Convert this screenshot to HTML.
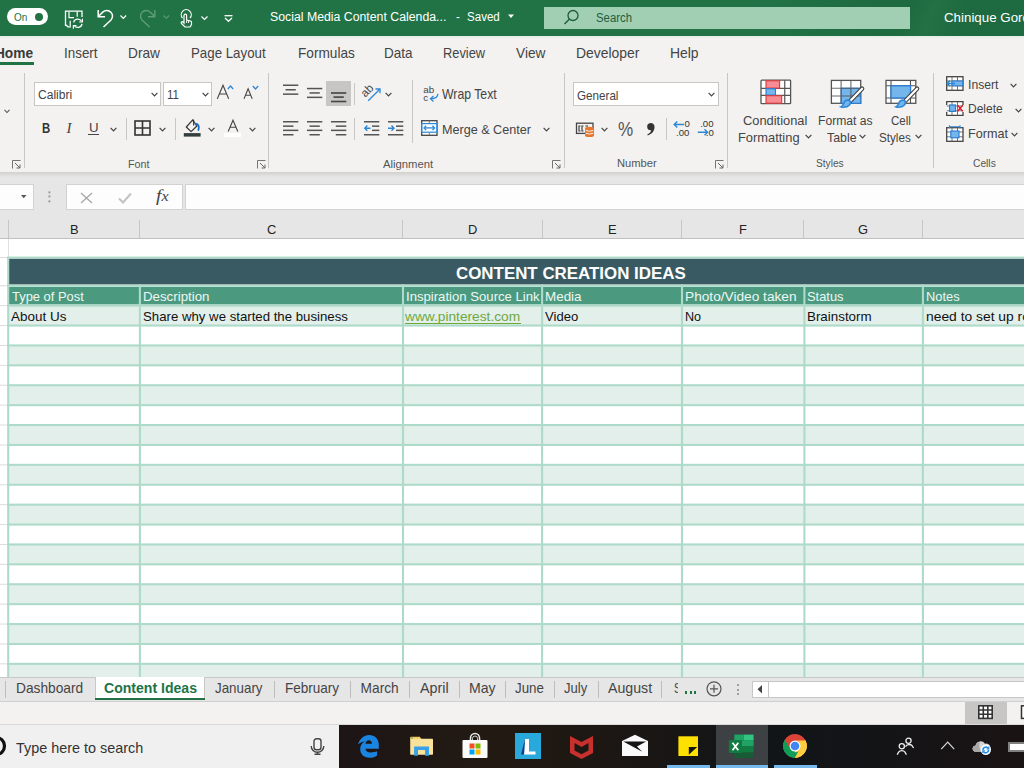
<!DOCTYPE html>
<html><head><meta charset="utf-8"><style>
html,body{margin:0;padding:0;}
body{width:1024px;height:768px;overflow:hidden;position:relative;background:#f3f2f1;font-family:"Liberation Sans",sans-serif;}
.t{position:absolute;white-space:nowrap;transform-origin:0 0;}
.r{position:absolute;}
svg.r{overflow:visible;}
</style></head><body>
<div class="r" style="left:0px;top:0px;width:1024px;height:36px;background:#217346;"></div>
<div class="r" style="left:0;top:0;width:1024px;height:36px;background:linear-gradient(90deg,rgba(0,0,0,0) 0px,rgba(0,0,0,0) 760px,rgba(10,40,20,0.10) 860px,rgba(10,40,20,0.12) 1024px)"></div>
<div class="r" style="left:0;top:0;width:1024px;height:36px;background:linear-gradient(115deg,rgba(255,255,255,0) 0px,rgba(255,255,255,0) 830px,rgba(60,140,90,0.18) 850px,rgba(255,255,255,0) 880px,rgba(255,255,255,0) 1024px)"></div>
<div class="r" style="left:0px;top:36px;width:1024px;height:136px;background:#f3f2f1;"></div>
<div class="r" style="left:0px;top:36px;width:1024px;height:2px;background:#eaeee9;"></div>
<div class="r" style="left:0px;top:172px;width:1024px;height:66px;background:#e6e6e6;"></div>
<div class="r" style="left:0;top:172px;width:1024px;height:5px;background:linear-gradient(#d2d0ce,#e6e6e6)"></div>
<div class="r" style="left:7px;top:8px;width:41px;height:17px;background:#ffffff;border-radius:8.5px"></div>
<div class="t" style="left:13.70px;top:12.16px;font-size:10.70px;line-height:10.70px;color:#217346;font-weight:normal;transform:scaleX(0.9311);">On</div>
<div class="r" style="left:35px;top:13px;width:8px;height:8px;border-radius:4px;background:#217346"></div>
<div class="t" style="left:269.80px;top:10.70px;font-size:12.89px;line-height:12.89px;color:#ffffff;font-weight:normal;transform:scaleX(0.9549);">Social Media Content Calenda...</div>
<div class="t" style="left:455.60px;top:10.70px;font-size:12.89px;line-height:12.89px;color:#ffffff;font-weight:normal;transform:scaleX(0.9096);">-</div>
<div class="t" style="left:467.00px;top:10.70px;font-size:12.89px;line-height:12.89px;color:#ffffff;font-weight:normal;transform:scaleX(0.8973);">Saved</div>
<svg class="r" style="left:508px;top:14px;" width="6" height="5" viewBox="0 0 6 5"><path d="M0 0.5 L6 0.5 L3 4 Z" fill="#fff"/></svg>
<div class="r" style="left:544px;top:7px;width:366px;height:22px;background:#a0cfb4;"></div>
<svg class="r" style="left:562px;top:9px;" width="16" height="17" viewBox="0 0 16 17"><circle cx="11" cy="6.5" r="5" fill="none" stroke="#1e5c3a" stroke-width="1.3"/><path d="M7.3 10.2 L2.5 15" stroke="#1e5c3a" stroke-width="1.4"/></svg>
<div class="t" style="left:596.00px;top:12.34px;font-size:12.62px;line-height:12.62px;color:#23603f;font-weight:normal;transform:scaleX(0.9006);">Search</div>
<div class="t" style="left:944.00px;top:12.34px;font-size:12.62px;line-height:12.62px;color:#ffffff;font-weight:normal;transform:scaleX(1.0569);">Chinique Gord</div>
<div class="t" style="left:-5.10px;top:46.51px;font-size:13.72px;line-height:13.72px;color:#3a3a3a;font-weight:bold;transform:scaleX(1.0000);">Home</div>
<div class="t" style="left:63.50px;top:46.51px;font-size:13.72px;line-height:13.72px;color:#444444;font-weight:normal;transform:scaleX(0.9769);">Insert</div>
<div class="t" style="left:128.00px;top:46.51px;font-size:13.72px;line-height:13.72px;color:#444444;font-weight:normal;transform:scaleX(0.9980);">Draw</div>
<div class="t" style="left:191.00px;top:46.51px;font-size:13.72px;line-height:13.72px;color:#444444;font-weight:normal;transform:scaleX(0.9685);">Page Layout</div>
<div class="t" style="left:297.60px;top:46.51px;font-size:13.72px;line-height:13.72px;color:#444444;font-weight:normal;transform:scaleX(0.9953);">Formulas</div>
<div class="t" style="left:384.40px;top:46.51px;font-size:13.72px;line-height:13.72px;color:#444444;font-weight:normal;transform:scaleX(0.9835);">Data</div>
<div class="t" style="left:442.80px;top:46.51px;font-size:13.72px;line-height:13.72px;color:#444444;font-weight:normal;transform:scaleX(0.9372);">Review</div>
<div class="t" style="left:515.70px;top:46.51px;font-size:13.72px;line-height:13.72px;color:#444444;font-weight:normal;transform:scaleX(0.9991);">View</div>
<div class="t" style="left:575.70px;top:46.51px;font-size:13.72px;line-height:13.72px;color:#444444;font-weight:normal;transform:scaleX(1.0157);">Developer</div>
<div class="t" style="left:670.00px;top:46.51px;font-size:13.72px;line-height:13.72px;color:#444444;font-weight:normal;transform:scaleX(1.0133);">Help</div>
<div class="r" style="left:0px;top:62px;width:34px;height:3px;background:#217346;"></div>
<div class="r" style="left:24px;top:73px;width:1px;height:95px;background:#c8c6c4;"></div>
<div class="r" style="left:268px;top:73px;width:1px;height:95px;background:#c8c6c4;"></div>
<div class="r" style="left:564px;top:73px;width:1px;height:95px;background:#c8c6c4;"></div>
<div class="r" style="left:727px;top:73px;width:1px;height:95px;background:#c8c6c4;"></div>
<div class="r" style="left:933px;top:73px;width:1px;height:95px;background:#c8c6c4;"></div>
<svg class="r" style="left:64px;top:10px;" width="20" height="19" viewBox="0 0 20 19"><path d="M1.5 16 V1.2 H18 V7 M1.5 14.5 L3.9 16.8 H6.9" fill="none" stroke="#fff" stroke-width="1.3"/><path d="M5 1.5 V7.7 H10 M13.2 1.5 V6.8 M6.2 10.8 V16.3" fill="none" stroke="#fff" stroke-width="1.2"/><path d="M9.6 12.3 A4.3 4.3 0 0 1 17.5 11.2 M18 13.8 A4.3 4.3 0 0 1 10.2 15.5" fill="none" stroke="#fff" stroke-width="1.3"/><path d="M18.4 8.8 V12 H15.2 M9.4 18.8 V15.5 H12.5" fill="none" stroke="#fff" stroke-width="1.2"/></svg>
<svg class="r" style="left:96px;top:9px;" width="18" height="20" viewBox="0 0 18 20"><path d="M2.2 1 V7.7 H9" fill="none" stroke="#fff" stroke-width="1.5"/><path d="M2.6 7.3 L7 2.9 A5.7 5.7 0 0 1 15 11 L7.5 18" fill="none" stroke="#fff" stroke-width="1.5"/></svg>
<svg class="r" style="left:120px;top:15px;" width="7" height="4" viewBox="0 0 7 4"><path d="M0.5 0.5 L3.3 3.3 L6.1 0.5" fill="none" stroke="#fff" stroke-width="1.2"/></svg>
<svg class="r" style="left:139px;top:9px;" width="18" height="20" viewBox="0 0 18 20"><path d="M15.8 1 V7.7 H9" fill="none" stroke="#5f9c77" stroke-width="1.4"/><path d="M15.4 7.3 L11 2.9 A5.7 5.7 0 0 0 3 11 L10.5 18" fill="none" stroke="#5f9c77" stroke-width="1.4"/></svg>
<svg class="r" style="left:163px;top:15px;" width="7" height="4" viewBox="0 0 7 4"><path d="M0.5 0.5 L3.3 3.3 L6.1 0.5" fill="none" stroke="#5f9c77" stroke-width="1.1"/></svg>
<svg class="r" style="left:179px;top:9px;" width="14" height="19" viewBox="0 0 14 19"><path d="M3.5 9 A5 5 0 1 1 11 9" fill="none" stroke="#fff" stroke-width="1.2"/><path d="M5 14 V6.5 A1.3 1.3 0 0 1 7.6 6.5 V11 L11 11.8 A1.5 1.5 0 0 1 12.5 13.5 V15.5 L11 18 H6 L2.5 14.5 A1 1 0 0 1 4 13 Z" fill="none" stroke="#fff" stroke-width="1.2"/><path d="M7.6 11.5 V14 M9.5 11.5 V14" stroke="#fff" stroke-width="0.9"/></svg>
<svg class="r" style="left:201px;top:16px;" width="7" height="4" viewBox="0 0 7 4"><path d="M0.5 0.5 L3.5 3.5 L6.5 0.5" fill="none" stroke="#fff" stroke-width="1.2"/></svg>
<svg class="r" style="left:224px;top:15px;" width="9" height="7" viewBox="0 0 9 7"><path d="M0.5 0.7 H8.5" stroke="#fff" stroke-width="1.3"/><path d="M1 3 L4.5 6.3 L8 3" fill="none" stroke="#fff" stroke-width="1.3"/></svg>
<svg class="r" style="left:4px;top:109px;" width="6" height="5" viewBox="0 0 6 5"><path d="M0.5 0.8 L3 3.5 L5.5 0.8" fill="none" stroke="#555" stroke-width="1.1"/></svg>
<svg class="r" style="left:12px;top:160px;" width="9" height="9" viewBox="0 0 9 9"><path d="M0.5 8.5 V0.5 H8.5" fill="none" stroke="#666" stroke-width="0.9"/><path d="M3 3 L8 8 M8 4.5 V8 H4.5" fill="none" stroke="#666" stroke-width="1"/></svg>
<svg class="r" style="left:256.5px;top:160px;" width="9" height="9" viewBox="0 0 9 9"><path d="M0.5 8.5 V0.5 H8.5" fill="none" stroke="#666" stroke-width="0.9"/><path d="M3 3 L8 8 M8 4.5 V8 H4.5" fill="none" stroke="#666" stroke-width="1"/></svg>
<svg class="r" style="left:552px;top:160px;" width="9" height="9" viewBox="0 0 9 9"><path d="M0.5 8.5 V0.5 H8.5" fill="none" stroke="#666" stroke-width="0.9"/><path d="M3 3 L8 8 M8 4.5 V8 H4.5" fill="none" stroke="#666" stroke-width="1"/></svg>
<svg class="r" style="left:714.5px;top:160px;" width="9" height="9" viewBox="0 0 9 9"><path d="M0.5 8.5 V0.5 H8.5" fill="none" stroke="#666" stroke-width="0.9"/><path d="M3 3 L8 8 M8 4.5 V8 H4.5" fill="none" stroke="#666" stroke-width="1"/></svg>
<div class="r" style="left:34px;top:82px;width:127px;height:24px;background:#ffffff;box-sizing:border-box;border:1px solid #c8c6c4"></div>
<div class="t" style="left:37.60px;top:89.24px;font-size:12.62px;line-height:12.62px;color:#444444;font-weight:normal;transform:scaleX(0.9559);">Calibri</div>
<svg class="r" style="left:150.5px;top:92px;" width="7" height="5" viewBox="0 0 7 5"><path d="M0.6 0.8 L3.5 3.8 L6.4 0.8" fill="none" stroke="#444" stroke-width="1.2"/></svg>
<div class="r" style="left:163px;top:82px;width:49px;height:24px;background:#ffffff;box-sizing:border-box;border:1px solid #c8c6c4"></div>
<div class="t" style="left:166.60px;top:89.00px;font-size:12.89px;line-height:12.89px;color:#444444;font-weight:normal;transform:scaleX(0.8970);">11</div>
<svg class="r" style="left:201.5px;top:92px;" width="7" height="5" viewBox="0 0 7 5"><path d="M0.6 0.8 L3.5 3.8 L6.4 0.8" fill="none" stroke="#444" stroke-width="1.2"/></svg>
<svg class="r" style="left:216px;top:84px;" width="14" height="16" viewBox="0 0 14 16"><path d="M1.3 14.9 L7 1.3 L12.7 14.9 M3.4 10 H10.6" fill="none" stroke="#444" stroke-width="1.15"/></svg>
<svg class="r" style="left:227px;top:85px;" width="7" height="5" viewBox="0 0 7 5"><path d="M0.8 4 L3.5 1 L6.2 4" fill="none" stroke="#2b88d8" stroke-width="1.3"/></svg>
<svg class="r" style="left:243px;top:88px;" width="11" height="12" viewBox="0 0 11 12"><path d="M1 10.9 L5.1 0.8 L9.2 10.9 M2.6 7.3 H7.6" fill="none" stroke="#444" stroke-width="1.1"/></svg>
<svg class="r" style="left:251.5px;top:85px;" width="7" height="5" viewBox="0 0 7 5"><path d="M0.8 1 L3.5 4 L6.2 1" fill="none" stroke="#2b88d8" stroke-width="1.3"/></svg>
<div class="t" style="left:41.70px;top:121.51px;font-size:13.72px;line-height:13.72px;color:#333333;font-weight:bold;transform:scaleX(0.8274);">B</div>
<div class="t" style="left:66.5px;top:121px;font-family:Liberation Serif;font-style:italic;font-size:15px;line-height:15px;color:#444">I</div>
<div class="t" style="left:88.60px;top:121.14px;font-size:13.44px;line-height:13.44px;color:#444444;font-weight:normal;transform:scaleX(0.9884);">U</div>
<div class="r" style="left:88px;top:134px;width:11px;height:1px;background:#444444;"></div>
<svg class="r" style="left:109.5px;top:126.5px;" width="7" height="5" viewBox="0 0 7 5"><path d="M0.6 0.8 L3.5 3.8 L6.4 0.8" fill="none" stroke="#444" stroke-width="1.2"/></svg>
<div class="r" style="left:126px;top:118px;width:1px;height:22px;background:#c8c6c4;"></div>
<svg class="r" style="left:134px;top:120px;" width="17" height="16" viewBox="0 0 17 16"><rect x="1" y="1" width="15" height="14" fill="none" stroke="#333" stroke-width="1.6"/><path d="M8.5 1 V15 M1 8 H16" stroke="#333" stroke-width="1.6"/></svg>
<svg class="r" style="left:158.5px;top:127px;" width="7" height="5" viewBox="0 0 7 5"><path d="M0.6 0.8 L3.5 3.8 L6.4 0.8" fill="none" stroke="#444" stroke-width="1.2"/></svg>
<div class="r" style="left:175px;top:118px;width:1px;height:22px;background:#c8c6c4;"></div>
<svg class="r" style="left:183px;top:118px;" width="19" height="20" viewBox="0 0 19 20"><path d="M3.3 9 L9.5 2.2 L14.2 7.8 L8.1 13.6 Z" fill="none" stroke="#333" stroke-width="1.2" stroke-linejoin="round"/><path d="M9.5 2.2 C10 1.6 10.8 2 10.7 3 L10.6 7.6" fill="none" stroke="#333" stroke-width="1.1"/><path d="M12.6 6.5 C14 5.3 15.8 6.6 15.8 9 C15.8 10.3 15.5 11.3 15.4 12" fill="none" stroke="#1e6fc2" stroke-width="1.8" stroke-linecap="round"/><rect x="0.8" y="15.1" width="16.8" height="3.5" fill="#333f3e"/></svg>
<svg class="r" style="left:207.8px;top:127px;" width="7" height="5" viewBox="0 0 7 5"><path d="M0.6 0.8 L3.5 3.8 L6.4 0.8" fill="none" stroke="#444" stroke-width="1.2"/></svg>
<svg class="r" style="left:227px;top:119px;" width="12" height="13" viewBox="0 0 12 13"><path d="M1.2 12.5 L6 1.2 L10.8 12.5 M3 8.3 H9" fill="none" stroke="#444" stroke-width="1.1"/></svg>
<div class="r" style="left:224px;top:133px;width:17px;height:4px;background:#ffffff;"></div>
<svg class="r" style="left:248.5px;top:127px;" width="7" height="5" viewBox="0 0 7 5"><path d="M0.6 0.8 L3.5 3.8 L6.4 0.8" fill="none" stroke="#444" stroke-width="1.2"/></svg>
<div class="t" style="left:127.80px;top:159.62px;font-size:10.15px;line-height:10.15px;color:#555555;font-weight:normal;transform:scaleX(1.0639);">Font</div>
<svg class="r" style="left:282.5px;top:84px;" width="16" height="12" viewBox="0 0 16 12"><rect x="0" y="0.5" width="15.3" height="1.5" fill="#555"/><rect x="2.5" y="5" width="10.3" height="1.5" fill="#555"/><rect x="0" y="9.4" width="15.3" height="1.5" fill="#555"/></svg>
<svg class="r" style="left:306.6px;top:87px;" width="16" height="12" viewBox="0 0 16 12"><rect x="0" y="0.8" width="15.3" height="1.5" fill="#555"/><rect x="2.5" y="5.2" width="10.3" height="1.5" fill="#555"/><rect x="0" y="9.6" width="15.3" height="1.5" fill="#555"/></svg>
<div class="r" style="left:326px;top:81px;width:25px;height:25px;background:#c8c6c4;"></div>
<svg class="r" style="left:330.8px;top:92px;" width="16" height="12" viewBox="0 0 16 12"><rect x="0" y="0.2" width="15.3" height="1.6" fill="#444"/><rect x="2.5" y="4.3" width="10.3" height="1.6" fill="#444"/><rect x="0" y="8.7" width="15.3" height="1.6" fill="#444"/></svg>
<div class="r" style="left:354px;top:83px;width:1px;height:22px;background:#c8c6c4;"></div>
<svg class="r" style="left:361px;top:83px;" width="21" height="19" viewBox="0 0 21 19"><text x="0" y="0" font-family="Liberation Sans" font-size="11.5" fill="#444" transform="translate(4.2,14.8) rotate(-45)">ab</text><path d="M7.2 17.7 L18.8 6.2" stroke="#2b88d8" stroke-width="1.3"/><path d="M14.5 6 H19 V10.2" fill="none" stroke="#2b88d8" stroke-width="1.3"/></svg>
<svg class="r" style="left:385px;top:92px;" width="7" height="5" viewBox="0 0 7 5"><path d="M0.6 0.8 L3.5 3.8 L6.4 0.8" fill="none" stroke="#444" stroke-width="1.2"/></svg>
<svg class="r" style="left:282.5px;top:120.5px;" width="16" height="15" viewBox="0 0 16 15"><rect x="0" y="0.0" width="15.3" height="1.5" fill="#555"/><rect x="0" y="4.4" width="10.5" height="1.5" fill="#555"/><rect x="0" y="8.6" width="15.3" height="1.5" fill="#555"/><rect x="0" y="13.0" width="10.5" height="1.5" fill="#555"/></svg>
<svg class="r" style="left:306.6px;top:120.5px;" width="16" height="15" viewBox="0 0 16 15"><rect x="0" y="0.0" width="15.3" height="1.5" fill="#555"/><rect x="2.5" y="4.4" width="10.3" height="1.5" fill="#555"/><rect x="0" y="8.6" width="15.3" height="1.5" fill="#555"/><rect x="2.5" y="13.0" width="10.3" height="1.5" fill="#555"/></svg>
<svg class="r" style="left:331px;top:120.5px;" width="16" height="15" viewBox="0 0 16 15"><rect x="0" y="0.0" width="15.3" height="1.5" fill="#555"/><rect x="4.8" y="4.4" width="10.5" height="1.5" fill="#555"/><rect x="0" y="8.6" width="15.3" height="1.5" fill="#555"/><rect x="4.8" y="13.0" width="10.5" height="1.5" fill="#555"/></svg>
<div class="r" style="left:354px;top:118px;width:1px;height:22px;background:#c8c6c4;"></div>
<svg class="r" style="left:363.7px;top:120.5px;" width="16" height="15" viewBox="0 0 16 15"><rect x="0" y="0" width="15.3" height="1.5" fill="#555"/><rect x="8" y="4.4" width="7.3" height="1.5" fill="#555"/><rect x="8" y="8.6" width="7.3" height="1.5" fill="#555"/><rect x="0" y="13" width="15.3" height="1.5" fill="#555"/><path d="M6.5 7.2 H0.8 M3.3 4.6 L0.8 7.2 L3.3 9.8" fill="none" stroke="#2b88d8" stroke-width="1.4"/></svg>
<svg class="r" style="left:388px;top:120.5px;" width="16" height="15" viewBox="0 0 16 15"><rect x="0" y="0" width="15.3" height="1.5" fill="#555"/><rect x="8" y="4.4" width="7.3" height="1.5" fill="#555"/><rect x="8" y="8.6" width="7.3" height="1.5" fill="#555"/><rect x="0" y="13" width="15.3" height="1.5" fill="#555"/><path d="M0 7.2 H6 M3.5 4.6 L6 7.2 L3.5 9.8" fill="none" stroke="#2b88d8" stroke-width="1.4"/></svg>
<div class="r" style="left:412px;top:79.5px;width:1px;height:63px;background:#c8c6c4;"></div>
<svg class="r" style="left:423px;top:85px;" width="17" height="18" viewBox="0 0 17 18"><text x="0.3" y="7.6" font-family="Liberation Sans" font-size="9.8" fill="#444">ab</text><text x="0.3" y="15.6" font-family="Liberation Sans" font-size="9.8" fill="#444">c</text><path d="M14.8 8.8 C14.8 11.8 12.3 13.8 7.8 13.8" fill="none" stroke="#2b88d8" stroke-width="1.3"/><path d="M10.5 11 L7.5 13.8 L10.5 16.6" fill="none" stroke="#2b88d8" stroke-width="1.3"/></svg>
<div class="t" style="left:442.00px;top:87.81px;font-size:13.72px;line-height:13.72px;color:#444444;font-weight:normal;transform:scaleX(0.8931);">Wrap Text</div>
<svg class="r" style="left:421px;top:120px;" width="17" height="16" viewBox="0 0 17 16"><rect x="0.7" y="0.7" width="15.3" height="14.6" fill="#fff" stroke="#444" stroke-width="1.3"/><rect x="0.9" y="3.6" width="14.9" height="8.6" fill="#fff" stroke="#2b88d8" stroke-width="1.2"/><path d="M8.3 0.7 V3 M8.3 12.8 V15" stroke="#777" stroke-width="1"/><path d="M3 7.9 H13.6" stroke="#2b88d8" stroke-width="1.3"/><path d="M5.2 5.7 L3 7.9 L5.2 10.1 M11.4 5.7 L13.6 7.9 L11.4 10.1" fill="none" stroke="#2b88d8" stroke-width="1.3"/></svg>
<div class="t" style="left:442.00px;top:122.67px;font-size:13.17px;line-height:13.17px;color:#444444;font-weight:normal;transform:scaleX(0.9573);">Merge &amp; Center</div>
<svg class="r" style="left:543px;top:126.5px;" width="7" height="5" viewBox="0 0 7 5"><path d="M0.6 0.8 L3.5 3.8 L6.4 0.8" fill="none" stroke="#444" stroke-width="1.2"/></svg>
<div class="t" style="left:383.10px;top:159.62px;font-size:10.15px;line-height:10.15px;color:#555555;font-weight:normal;transform:scaleX(1.1142);">Alignment</div>
<div class="r" style="left:573px;top:81.5px;width:146px;height:24px;background:#ffffff;box-sizing:border-box;border:1px solid #c8c6c4"></div>
<div class="t" style="left:576.60px;top:88.87px;font-size:13.17px;line-height:13.17px;color:#444444;font-weight:normal;transform:scaleX(0.8858);">General</div>
<svg class="r" style="left:707.5px;top:92px;" width="7" height="5" viewBox="0 0 7 5"><path d="M0.6 0.8 L3.5 3.8 L6.4 0.8" fill="none" stroke="#444" stroke-width="1.2"/></svg>
<svg class="r" style="left:575px;top:121px;" width="21" height="16" viewBox="0 0 21 16"><rect x="1.5" y="2.2" width="16.5" height="10.2" fill="none" stroke="#444" stroke-width="1.3"/><path d="M5.5 5 H4 V10 H5.5 M8.5 5 H7 V10 H8.5" fill="none" stroke="#444" stroke-width="1.2"/><path d="M10.5 5 H13" stroke="#444" stroke-width="1.2"/><rect x="10" y="7.5" width="9" height="7.5" rx="1.5" fill="#e8772e"/><ellipse cx="14.5" cy="7.5" rx="4.5" ry="1.8" fill="#e8772e"/><ellipse cx="14.5" cy="14.5" rx="4.5" ry="1.6" fill="#e8772e"/><path d="M10.8 9.5 Q14.5 11 18.2 9.5 M10.8 12.3 Q14.5 13.8 18.2 12.3" stroke="#fff" stroke-width="0.9" fill="none"/></svg>
<svg class="r" style="left:601px;top:127px;" width="7" height="5" viewBox="0 0 7 5"><path d="M0.6 0.8 L3.5 3.8 L6.4 0.8" fill="none" stroke="#444" stroke-width="1.2"/></svg>
<div class="t" style="left:617.80px;top:119.92px;font-size:19.62px;line-height:19.62px;color:#555555;font-weight:normal;transform:scaleX(0.8707);">%</div>
<svg class="r" style="left:646px;top:122px;" width="10" height="14" viewBox="0 0 10 14"><path d="M4.5 1 A3.8 3.8 0 0 1 8.5 5 C8.5 9 6 12 1.8 13.5 L1.3 12.6 C3.8 11.3 5 9.8 5.2 8.3 A3.6 3.6 0 0 1 4.5 1 Z" fill="#333"/></svg>
<div class="r" style="left:666px;top:118px;width:1px;height:22px;background:#c8c6c4;"></div>
<svg class="r" style="left:673px;top:119px;" width="19" height="18" viewBox="0 0 19 18"><text x="11.5" y="7.8" font-family="Liberation Sans" font-size="9.6" fill="#333">0</text><text x="3" y="16.6" font-family="Liberation Sans" font-size="9.6" fill="#333">.00</text><path d="M1.2 5.5 H11 M4.3 2.5 L1.2 5.5 L4.3 8.5" fill="none" stroke="#2b88d8" stroke-width="1.4"/></svg>
<svg class="r" style="left:697px;top:119px;" width="19" height="18" viewBox="0 0 19 18"><text x="3.2" y="7.8" font-family="Liberation Sans" font-size="9.6" fill="#333">.00</text><text x="8.8" y="16.6" font-family="Liberation Sans" font-size="9.6" fill="#333">.0</text><path d="M0.8 13.3 H10.5 M7.5 10.3 L10.6 13.3 L7.5 16.3" fill="none" stroke="#2b88d8" stroke-width="1.4"/></svg>
<div class="t" style="left:617.30px;top:158.91px;font-size:10.29px;line-height:10.29px;color:#555555;font-weight:normal;transform:scaleX(1.0874);">Number</div>
<svg class="r" style="left:760px;top:79px;" width="32" height="26" viewBox="0 0 32 26"><rect x="1" y="1.2" width="29.6" height="23.5" rx="0.8" fill="#fff" stroke="#555" stroke-width="1.3"/>
<path d="M1 9.3 H30.6 M1 16.4 H30.6 M24.75 1.2 V24.7" stroke="#555" stroke-width="1.2"/>
<rect x="6" y="1.8" width="13.6" height="7.3" fill="#f78c95" stroke="#d93a3a" stroke-width="1.1"/>
<rect x="6" y="9.7" width="9.5" height="6.4" fill="#74b5ec" stroke="#2b7cd3" stroke-width="1.1"/>
<rect x="6" y="16.7" width="15.7" height="7.5" fill="#f78c95" stroke="#d93a3a" stroke-width="1.1"/></svg>
<div class="t" style="left:743.00px;top:114.49px;font-size:13.03px;line-height:13.03px;color:#444444;font-weight:normal;transform:scaleX(0.9879);">Conditional</div>
<div class="t" style="left:738.30px;top:131.52px;font-size:12.76px;line-height:12.76px;color:#444444;font-weight:normal;transform:scaleX(1.0102);">Formatting</div>
<svg class="r" style="left:805px;top:133.5px;" width="7" height="5" viewBox="0 0 7 5"><path d="M0.6 0.8 L3.5 3.8 L6.4 0.8" fill="none" stroke="#444" stroke-width="1.2"/></svg>
<svg class="r" style="left:830px;top:79px;" width="34" height="31" viewBox="0 0 34 31"><rect x="1.4" y="1.4" width="29.3" height="22.9" fill="#fff" stroke="#555" stroke-width="1.3"/>
<rect x="11.1" y="9.2" width="19.6" height="15.1" fill="#74b5ec" stroke="#2b7cd3" stroke-width="1.1"/>
<path d="M11.1 1.4 V24.3 M20.9 1.4 V24.3 M1.4 9.2 H30.7 M1.4 17 H30.7" stroke="#555" stroke-width="1.1" opacity="0.85"/>
<path d="M32.1 9.7 L20.2 22" stroke="#444" stroke-width="4.4" stroke-linecap="round"/><path d="M32.1 9.7 L20.2 22" stroke="#fff" stroke-width="2.2" stroke-linecap="round"/><path d="M20 21 C17.5 19.5 14.5 20.5 13.5 23 C12.5 25.8 11.5 27.3 8.8 27.8 C12 29.8 17.5 29.3 20 26.5 C21.8 24.5 21.8 22 20 21 Z" fill="#2b88d8"/><path d="M19 22.3 C17 21.6 15.3 22.5 14.8 24 C14.3 25.7 13.5 26.8 12.2 27.4 C15 27.8 17.5 27 18.8 25.5 C19.8 24.4 20 23 19 22.3 Z" fill="#74b5ec"/></svg>
<div class="t" style="left:818.30px;top:114.49px;font-size:13.03px;line-height:13.03px;color:#444444;font-weight:normal;transform:scaleX(0.9328);">Format as</div>
<div class="t" style="left:826.50px;top:131.52px;font-size:12.76px;line-height:12.76px;color:#444444;font-weight:normal;transform:scaleX(0.9675);">Table</div>
<svg class="r" style="left:859px;top:133.5px;" width="7" height="5" viewBox="0 0 7 5"><path d="M0.6 0.8 L3.5 3.8 L6.4 0.8" fill="none" stroke="#444" stroke-width="1.2"/></svg>
<svg class="r" style="left:885px;top:79px;" width="34" height="31" viewBox="0 0 34 31"><rect x="1" y="1.4" width="29.8" height="22.9" fill="#fff" stroke="#555" stroke-width="1.3"/>
<path d="M6 1.4 V24.3 M25.5 1.4 V24.3 M1 6.8 H30.8 M1 19 H30.8" stroke="#555" stroke-width="1.1"/>
<rect x="6" y="6.8" width="19.5" height="12.2" fill="#74b5ec" stroke="#2b7cd3" stroke-width="1.3"/>
<path d="M32.1 9.7 L20.2 22" stroke="#444" stroke-width="4.4" stroke-linecap="round"/><path d="M32.1 9.7 L20.2 22" stroke="#fff" stroke-width="2.2" stroke-linecap="round"/><path d="M20 21 C17.5 19.5 14.5 20.5 13.5 23 C12.5 25.8 11.5 27.3 8.8 27.8 C12 29.8 17.5 29.3 20 26.5 C21.8 24.5 21.8 22 20 21 Z" fill="#2b88d8"/><path d="M19 22.3 C17 21.6 15.3 22.5 14.8 24 C14.3 25.7 13.5 26.8 12.2 27.4 C15 27.8 17.5 27 18.8 25.5 C19.8 24.4 20 23 19 22.3 Z" fill="#74b5ec"/></svg>
<div class="t" style="left:890.70px;top:114.49px;font-size:13.03px;line-height:13.03px;color:#444444;font-weight:normal;transform:scaleX(0.8865);">Cell</div>
<div class="t" style="left:879.20px;top:131.52px;font-size:12.76px;line-height:12.76px;color:#444444;font-weight:normal;transform:scaleX(0.9156);">Styles</div>
<svg class="r" style="left:914.5px;top:133.5px;" width="7" height="5" viewBox="0 0 7 5"><path d="M0.6 0.8 L3.5 3.8 L6.4 0.8" fill="none" stroke="#444" stroke-width="1.2"/></svg>
<div class="t" style="left:816.30px;top:159.44px;font-size:10.01px;line-height:10.01px;color:#555555;font-weight:normal;transform:scaleX(1.0161);">Styles</div>
<svg class="r" style="left:946px;top:76px;" width="18" height="16" viewBox="0 0 18 16"><rect x="0.7" y="0.7" width="16.3" height="13.6" fill="#fff" stroke="#444" stroke-width="1.3"/><path d="M6 0.7 V14.3 M11.5 0.7 V14.3 M0.7 5 H17 M0.7 9.8 H17" stroke="#555" stroke-width="1" opacity="0.8"/><rect x="6" y="5" width="10.8" height="4.8" fill="#74b5ec" stroke="#2b7cd3" stroke-width="1.1"/><path d="M9 7.4 H1.3 M4 4.6 L1.2 7.4 L4 10.2" fill="none" stroke="#2b88d8" stroke-width="1.5"/></svg>
<div class="t" style="left:967.50px;top:78.57px;font-size:12.35px;line-height:12.35px;color:#444444;font-weight:normal;transform:scaleX(0.9850);">Insert</div>
<svg class="r" style="left:1009.5px;top:82.5px;" width="7" height="5" viewBox="0 0 7 5"><path d="M0.6 0.8 L3.5 3.8 L6.4 0.8" fill="none" stroke="#444" stroke-width="1.2"/></svg>
<svg class="r" style="left:946px;top:101px;" width="18" height="16" viewBox="0 0 18 16"><rect x="0.7" y="0.7" width="16.3" height="13.6" fill="#fff"/><path d="M0.7 4 V0.7 H17 V4 M0.7 11 V14.3 H17 V11" fill="none" stroke="#444" stroke-width="1.3"/><path d="M6 0.7 V14.3 M11.5 0.7 V14.3 M0.7 5 H17 M0.7 9.8 H17" stroke="#555" stroke-width="1" opacity="0.8"/><rect x="3.5" y="4" width="6" height="6.4" fill="#74b5ec" stroke="#2b7cd3" stroke-width="1.2"/><path d="M11.5 4.2 L16.8 10.2 M16.8 4.2 L11.5 10.2" stroke="#e81123" stroke-width="1.3"/></svg>
<div class="t" style="left:967.50px;top:103.22px;font-size:12.76px;line-height:12.76px;color:#444444;font-weight:normal;transform:scaleX(0.9412);">Delete</div>
<svg class="r" style="left:1014.5px;top:107.5px;" width="7" height="5" viewBox="0 0 7 5"><path d="M0.6 0.8 L3.5 3.8 L6.4 0.8" fill="none" stroke="#444" stroke-width="1.2"/></svg>
<svg class="r" style="left:946px;top:126.5px;" width="18" height="16" viewBox="0 0 18 16"><rect x="0.7" y="0.7" width="16.3" height="13.6" fill="#fff" stroke="#444" stroke-width="1.3"/><path d="M6 0.7 V14.3 M11.5 0.7 V14.3 M0.7 5 H17 M0.7 9.8 H17" stroke="#555" stroke-width="1" opacity="0.8"/><rect x="4.8" y="4" width="8.2" height="6.8" fill="#74b5ec" stroke="#2b7cd3" stroke-width="1.1"/><path d="M3.5 -0.3 H14 M3.5 -1.8 V1.2 M14 -1.8 V1.2" stroke="#2b88d8" stroke-width="1.1"/></svg>
<div class="t" style="left:967.50px;top:128.17px;font-size:12.35px;line-height:12.35px;color:#444444;font-weight:normal;transform:scaleX(1.0203);">Format</div>
<svg class="r" style="left:1011px;top:132px;" width="7" height="5" viewBox="0 0 7 5"><path d="M0.6 0.8 L3.5 3.8 L6.4 0.8" fill="none" stroke="#444" stroke-width="1.2"/></svg>
<div class="t" style="left:973.00px;top:159.32px;font-size:10.15px;line-height:10.15px;color:#555555;font-weight:normal;transform:scaleX(1.0106);">Cells</div>
<div class="r" style="left:0px;top:184px;width:34px;height:26px;background:#fdfdfd;box-sizing:border-box;border:1px solid #d2d2d2;border-left:none"></div>
<svg class="r" style="left:21px;top:195px;" width="6" height="4" viewBox="0 0 6 4"><path d="M0 0 H5.5 L2.75 3.2 Z" fill="#555"/></svg>
<svg class="r" style="left:48px;top:190.5px;" width="3" height="3" viewBox="0 0 3 3"><circle cx="1.4" cy="1.4" r="1.1" fill="#999"/></svg>
<svg class="r" style="left:48px;top:195px;" width="3" height="3" viewBox="0 0 3 3"><circle cx="1.4" cy="1.4" r="1.1" fill="#999"/></svg>
<svg class="r" style="left:48px;top:199.5px;" width="3" height="3" viewBox="0 0 3 3"><circle cx="1.4" cy="1.4" r="1.1" fill="#999"/></svg>
<div class="r" style="left:66px;top:184px;width:117px;height:26px;background:#fdfdfd;box-sizing:border-box;border:1px solid #d2d2d2"></div>
<svg class="r" style="left:79.5px;top:191.5px;" width="13" height="12" viewBox="0 0 13 12"><path d="M1 1 L12 11 M12 1 L1 11" stroke="#a6a6a6" stroke-width="1.3"/></svg>
<svg class="r" style="left:117.5px;top:191.5px;" width="14" height="12" viewBox="0 0 14 12"><path d="M1 6.5 L5 10.5 L13 1.5" fill="none" stroke="#c2c2c2" stroke-width="2"/></svg>
<div class="t" style="left:155.5px;top:186.5px;font-family:'Liberation Serif';font-style:italic;font-weight:normal;font-size:17px;line-height:17px;color:#444;transform:scaleX(1.15)">f<span style="font-size:14px">x</span></div>
<div class="r" style="left:185px;top:184px;width:839px;height:26px;background:#fdfdfd;box-sizing:border-box;border:1px solid #d2d2d2;border-right:none"></div>
<div class="r" style="left:0px;top:238px;width:1024px;height:1px;background:#c0c0c0;"></div>
<div class="r" style="left:8px;top:220px;width:1px;height:18px;background:#c6c6c6;"></div>
<div class="r" style="left:139px;top:220px;width:1px;height:18px;background:#c6c6c6;"></div>
<div class="r" style="left:402px;top:220px;width:1px;height:18px;background:#c6c6c6;"></div>
<div class="r" style="left:542px;top:220px;width:1px;height:18px;background:#c6c6c6;"></div>
<div class="r" style="left:681px;top:220px;width:1px;height:18px;background:#c6c6c6;"></div>
<div class="r" style="left:803px;top:220px;width:1px;height:18px;background:#c6c6c6;"></div>
<div class="r" style="left:922px;top:220px;width:1px;height:18px;background:#c6c6c6;"></div>
<div class="t" style="left:69.89px;top:224.00px;font-size:12.89px;line-height:12.89px;color:#222222;font-weight:normal;transform:scaleX(1.0004);">B</div>
<div class="t" style="left:266.84px;top:224.00px;font-size:12.89px;line-height:12.89px;color:#222222;font-weight:normal;transform:scaleX(1.0004);">C</div>
<div class="t" style="left:467.84px;top:224.00px;font-size:12.89px;line-height:12.89px;color:#222222;font-weight:normal;transform:scaleX(1.0004);">D</div>
<div class="t" style="left:607.69px;top:224.00px;font-size:12.89px;line-height:12.89px;color:#222222;font-weight:normal;transform:scaleX(1.0004);">E</div>
<div class="t" style="left:739.07px;top:224.00px;font-size:12.89px;line-height:12.89px;color:#222222;font-weight:normal;transform:scaleX(1.0004);">F</div>
<div class="t" style="left:858.49px;top:224.00px;font-size:12.89px;line-height:12.89px;color:#222222;font-weight:normal;transform:scaleX(1.0004);">G</div>
<div class="r" style="left:0px;top:239px;width:1024px;height:438px;background:#ffffff;"></div>
<svg class="r" style="left:0px;top:238px;" width="8" height="439" viewBox="0 0 8 439"><rect x="0" y="47.25" width="8" height="1" fill="#dcdcdc"/></svg>
<svg class="r" style="left:0px;top:238px;" width="8" height="439" viewBox="0 0 8 439"><rect x="0" y="67.15" width="8" height="1" fill="#dcdcdc"/></svg>
<svg class="r" style="left:0px;top:238px;" width="8" height="439" viewBox="0 0 8 439"><rect x="0" y="87.05" width="8" height="1" fill="#dcdcdc"/></svg>
<svg class="r" style="left:0px;top:238px;" width="8" height="439" viewBox="0 0 8 439"><rect x="0" y="106.95" width="8" height="1" fill="#dcdcdc"/></svg>
<svg class="r" style="left:0px;top:238px;" width="8" height="439" viewBox="0 0 8 439"><rect x="0" y="126.85" width="8" height="1" fill="#dcdcdc"/></svg>
<svg class="r" style="left:0px;top:238px;" width="8" height="439" viewBox="0 0 8 439"><rect x="0" y="146.75" width="8" height="1" fill="#dcdcdc"/></svg>
<svg class="r" style="left:0px;top:238px;" width="8" height="439" viewBox="0 0 8 439"><rect x="0" y="166.65" width="8" height="1" fill="#dcdcdc"/></svg>
<svg class="r" style="left:0px;top:238px;" width="8" height="439" viewBox="0 0 8 439"><rect x="0" y="186.55" width="8" height="1" fill="#dcdcdc"/></svg>
<svg class="r" style="left:0px;top:238px;" width="8" height="439" viewBox="0 0 8 439"><rect x="0" y="206.45" width="8" height="1" fill="#dcdcdc"/></svg>
<svg class="r" style="left:0px;top:238px;" width="8" height="439" viewBox="0 0 8 439"><rect x="0" y="226.35" width="8" height="1" fill="#dcdcdc"/></svg>
<svg class="r" style="left:0px;top:238px;" width="8" height="439" viewBox="0 0 8 439"><rect x="0" y="246.25" width="8" height="1" fill="#dcdcdc"/></svg>
<svg class="r" style="left:0px;top:238px;" width="8" height="439" viewBox="0 0 8 439"><rect x="0" y="266.15" width="8" height="1" fill="#dcdcdc"/></svg>
<svg class="r" style="left:0px;top:238px;" width="8" height="439" viewBox="0 0 8 439"><rect x="0" y="286.05" width="8" height="1" fill="#dcdcdc"/></svg>
<svg class="r" style="left:0px;top:238px;" width="8" height="439" viewBox="0 0 8 439"><rect x="0" y="305.95" width="8" height="1" fill="#dcdcdc"/></svg>
<svg class="r" style="left:0px;top:238px;" width="8" height="439" viewBox="0 0 8 439"><rect x="0" y="325.85" width="8" height="1" fill="#dcdcdc"/></svg>
<svg class="r" style="left:0px;top:238px;" width="8" height="439" viewBox="0 0 8 439"><rect x="0" y="345.75" width="8" height="1" fill="#dcdcdc"/></svg>
<svg class="r" style="left:0px;top:238px;" width="8" height="439" viewBox="0 0 8 439"><rect x="0" y="365.65" width="8" height="1" fill="#dcdcdc"/></svg>
<svg class="r" style="left:0px;top:238px;" width="8" height="439" viewBox="0 0 8 439"><rect x="0" y="385.55" width="8" height="1" fill="#dcdcdc"/></svg>
<svg class="r" style="left:0px;top:238px;" width="8" height="439" viewBox="0 0 8 439"><rect x="0" y="405.45" width="8" height="1" fill="#dcdcdc"/></svg>
<svg class="r" style="left:0px;top:238px;" width="8" height="439" viewBox="0 0 8 439"><rect x="0" y="425.35" width="8" height="1" fill="#dcdcdc"/></svg>
<div class="r" style="left:0px;top:257px;width:8px;height:1px;background:#dcdcdc;"></div>
<div class="r" style="left:8px;top:239px;width:1px;height:18px;background:#e0e0e0;"></div>
<svg class="r" style="left:0px;top:238px;overflow:hidden" width="1024" height="439" viewBox="0 0 1024 439"><rect x="8" y="20.600000000000023" width="1016" height="25.899999999999977" fill="#3a5a63"/><rect x="8" y="49" width="1016" height="17.5" fill="#4b9a80"/><rect x="8" y="67.65" width="1016" height="19.90" fill="#e2efeb"/><rect x="8" y="87.55" width="1016" height="19.90" fill="#ffffff"/><rect x="8" y="107.45" width="1016" height="19.90" fill="#e2efeb"/><rect x="8" y="127.35" width="1016" height="19.90" fill="#ffffff"/><rect x="8" y="147.25" width="1016" height="19.90" fill="#e2efeb"/><rect x="8" y="167.15" width="1016" height="19.90" fill="#ffffff"/><rect x="8" y="187.05" width="1016" height="19.90" fill="#e2efeb"/><rect x="8" y="206.95" width="1016" height="19.90" fill="#ffffff"/><rect x="8" y="226.85" width="1016" height="19.90" fill="#e2efeb"/><rect x="8" y="246.75" width="1016" height="19.90" fill="#ffffff"/><rect x="8" y="266.65" width="1016" height="19.90" fill="#e2efeb"/><rect x="8" y="286.55" width="1016" height="19.90" fill="#ffffff"/><rect x="8" y="306.45" width="1016" height="19.90" fill="#e2efeb"/><rect x="8" y="326.35" width="1016" height="19.90" fill="#ffffff"/><rect x="8" y="346.25" width="1016" height="19.90" fill="#e2efeb"/><rect x="8" y="366.15" width="1016" height="19.90" fill="#ffffff"/><rect x="8" y="386.05" width="1016" height="19.90" fill="#e2efeb"/><rect x="8" y="405.95" width="1016" height="19.90" fill="#ffffff"/><rect x="8" y="425.85" width="1016" height="19.90" fill="#e2efeb"/><rect x="7" y="18.55" width="1017" height="2.1" fill="#aedbc9"/><rect x="7" y="46.75" width="1017" height="2.1" fill="#aedbc9"/><rect x="7" y="66.60" width="1017" height="2.1" fill="#aedbc9"/><rect x="7" y="86.50" width="1017" height="2.1" fill="#aedbc9"/><rect x="7" y="106.40" width="1017" height="2.1" fill="#aedbc9"/><rect x="7" y="126.30" width="1017" height="2.1" fill="#aedbc9"/><rect x="7" y="146.20" width="1017" height="2.1" fill="#aedbc9"/><rect x="7" y="166.10" width="1017" height="2.1" fill="#aedbc9"/><rect x="7" y="186.00" width="1017" height="2.1" fill="#aedbc9"/><rect x="7" y="205.90" width="1017" height="2.1" fill="#aedbc9"/><rect x="7" y="225.80" width="1017" height="2.1" fill="#aedbc9"/><rect x="7" y="245.70" width="1017" height="2.1" fill="#aedbc9"/><rect x="7" y="265.60" width="1017" height="2.1" fill="#aedbc9"/><rect x="7" y="285.50" width="1017" height="2.1" fill="#aedbc9"/><rect x="7" y="305.40" width="1017" height="2.1" fill="#aedbc9"/><rect x="7" y="325.30" width="1017" height="2.1" fill="#aedbc9"/><rect x="7" y="345.20" width="1017" height="2.1" fill="#aedbc9"/><rect x="7" y="365.10" width="1017" height="2.1" fill="#aedbc9"/><rect x="7" y="385.00" width="1017" height="2.1" fill="#aedbc9"/><rect x="7" y="404.90" width="1017" height="2.1" fill="#aedbc9"/><rect x="7" y="424.80" width="1017" height="2.1" fill="#aedbc9"/><rect x="7.15" y="19" width="2.1" height="420" fill="#aedbc9"/><rect x="138.85" y="46.5" width="2.1" height="392.5" fill="#aedbc9"/><rect x="401.95" y="46.5" width="2.1" height="392.5" fill="#aedbc9"/><rect x="541.05" y="46.5" width="2.1" height="392.5" fill="#aedbc9"/><rect x="680.95" y="46.5" width="2.1" height="392.5" fill="#aedbc9"/><rect x="803.35" y="46.5" width="2.1" height="392.5" fill="#aedbc9"/><rect x="921.85" y="46.5" width="2.1" height="392.5" fill="#aedbc9"/></svg>
<div class="t" style="left:455.70px;top:264.99px;font-size:16.46px;line-height:16.46px;color:#ffffff;font-weight:bold;transform:scaleX(1.0284);">CONTENT CREATION IDEAS</div>
<div class="t" style="left:11.70px;top:291.52px;font-size:11.93px;line-height:11.93px;color:#eef7f3;font-weight:normal;transform:scaleX(1.0836);">Type of Post</div>
<div class="t" style="left:142.70px;top:291.52px;font-size:11.93px;line-height:11.93px;color:#eef7f3;font-weight:normal;transform:scaleX(1.1139);">Description</div>
<div class="t" style="left:406.20px;top:291.52px;font-size:11.93px;line-height:11.93px;color:#eef7f3;font-weight:normal;transform:scaleX(1.1019);">Inspiration Source Link</div>
<div class="t" style="left:545.30px;top:291.52px;font-size:11.93px;line-height:11.93px;color:#eef7f3;font-weight:normal;transform:scaleX(1.1254);">Media</div>
<div class="t" style="left:684.50px;top:291.52px;font-size:11.93px;line-height:11.93px;color:#eef7f3;font-weight:normal;transform:scaleX(1.1477);">Photo/Video taken</div>
<div class="t" style="left:806.50px;top:291.52px;font-size:11.93px;line-height:11.93px;color:#eef7f3;font-weight:normal;transform:scaleX(1.0788);">Status</div>
<div class="t" style="left:926.00px;top:291.52px;font-size:11.93px;line-height:11.93px;color:#eef7f3;font-weight:normal;transform:scaleX(1.0777);">Notes</div>
<div class="t" style="left:10.90px;top:312.22px;font-size:11.93px;line-height:11.93px;color:#111;font-weight:normal;transform:scaleX(1.1308);">About Us</div>
<div class="t" style="left:142.70px;top:312.22px;font-size:11.93px;line-height:11.93px;color:#111;font-weight:normal;transform:scaleX(1.1081);">Share why we started the business</div>
<div class="t" style="left:405.23px;top:312.22px;font-size:11.93px;line-height:11.93px;color:#70a83a;font-weight:normal;transform:scaleX(1.1508);">www.pinterest.com</div>
<div class="t" style="left:544.80px;top:312.22px;font-size:11.93px;line-height:11.93px;color:#111;font-weight:normal;transform:scaleX(1.0985);">Video</div>
<div class="t" style="left:684.50px;top:312.22px;font-size:11.93px;line-height:11.93px;color:#111;font-weight:normal;transform:scaleX(1.0560);">No</div>
<div class="t" style="left:807.10px;top:312.22px;font-size:11.93px;line-height:11.93px;color:#111;font-weight:normal;transform:scaleX(1.1213);">Brainstorm</div>
<div class="t" style="left:926.00px;top:312.22px;font-size:11.93px;line-height:11.93px;color:#111;font-weight:normal;transform:scaleX(1.1612);">need to set up ro</div>
<div class="r" style="left:405px;top:323px;width:116px;height:1px;background:#70a83a;"></div>
<div class="r" style="left:0px;top:677px;width:1024px;height:25px;background:#e6e6e6;"></div>
<div class="r" style="left:0px;top:677px;width:1024px;height:1px;background:#c8c8c8;"></div>
<div class="r" style="left:95px;top:677px;width:110px;height:22px;background:#ffffff;box-sizing:border-box;border-left:1px solid #c8c8c8;border-right:1px solid #c8c8c8"></div>
<div class="r" style="left:95px;top:698px;width:110px;height:2px;background:#217346;"></div>
<div class="t" style="left:103.50px;top:681.81px;font-size:13.72px;line-height:13.72px;color:#217346;font-weight:bold;transform:scaleX(1.0253);">Content Ideas</div>
<div class="t" style="left:16.20px;top:681.81px;font-size:13.72px;line-height:13.72px;color:#444444;font-weight:normal;transform:scaleX(0.9998);">Dashboard</div>
<div class="r" style="left:5px;top:681px;width:1px;height:17px;background:#bdbdbd;"></div>
<div class="t" style="left:214.90px;top:681.81px;font-size:13.72px;line-height:13.72px;color:#444444;font-weight:normal;transform:scaleX(0.9734);">January</div>
<div class="t" style="left:285.20px;top:681.81px;font-size:13.72px;line-height:13.72px;color:#444444;font-weight:normal;transform:scaleX(0.9854);">February</div>
<div class="t" style="left:360.60px;top:681.81px;font-size:13.72px;line-height:13.72px;color:#444444;font-weight:normal;transform:scaleX(1.0000);">March</div>
<div class="t" style="left:419.80px;top:681.81px;font-size:13.72px;line-height:13.72px;color:#444444;font-weight:normal;transform:scaleX(1.0461);">April</div>
<div class="t" style="left:469.20px;top:681.81px;font-size:13.72px;line-height:13.72px;color:#444444;font-weight:normal;transform:scaleX(1.0260);">May</div>
<div class="t" style="left:514.70px;top:681.81px;font-size:13.72px;line-height:13.72px;color:#444444;font-weight:normal;transform:scaleX(0.9720);">June</div>
<div class="t" style="left:563.50px;top:681.81px;font-size:13.72px;line-height:13.72px;color:#444444;font-weight:normal;transform:scaleX(0.9515);">July</div>
<div class="t" style="left:607.70px;top:681.81px;font-size:13.72px;line-height:13.72px;color:#444444;font-weight:normal;transform:scaleX(1.0329);">August</div>
<div class="r" style="left:274px;top:681px;width:1px;height:17px;background:#bdbdbd;"></div>
<div class="r" style="left:350px;top:681px;width:1px;height:17px;background:#bdbdbd;"></div>
<div class="r" style="left:409px;top:681px;width:1px;height:17px;background:#bdbdbd;"></div>
<div class="r" style="left:459px;top:681px;width:1px;height:17px;background:#bdbdbd;"></div>
<div class="r" style="left:505px;top:681px;width:1px;height:17px;background:#bdbdbd;"></div>
<div class="r" style="left:554px;top:681px;width:1px;height:17px;background:#bdbdbd;"></div>
<div class="r" style="left:598px;top:681px;width:1px;height:17px;background:#bdbdbd;"></div>
<div class="r" style="left:661px;top:681px;width:1px;height:17px;background:#bdbdbd;"></div>
<div class="t" style="left:674.00px;top:681.81px;font-size:13.72px;line-height:13.72px;color:#444444;font-weight:normal;transform:scaleX(0.7645);clip-path:inset(0 45% 0 0)">S</div>
<div class="r" style="left:685px;top:691px;width:2.2px;height:2.5px;background:#217346;"></div>
<div class="r" style="left:689.5px;top:691px;width:2.2px;height:2.5px;background:#217346;"></div>
<div class="r" style="left:694px;top:691px;width:2.2px;height:2.5px;background:#217346;"></div>
<svg class="r" style="left:706px;top:681px;" width="16" height="16" viewBox="0 0 16 16"><circle cx="8" cy="7.8" r="7" fill="none" stroke="#555" stroke-width="1.2"/><path d="M8 3.8 V11.8 M4 7.8 H12" stroke="#555" stroke-width="1.2"/></svg>
<div class="r" style="left:737px;top:684px;width:2px;height:2px;background:#a0a0a0;"></div>
<div class="r" style="left:737px;top:688.5px;width:2px;height:2px;background:#a0a0a0;"></div>
<div class="r" style="left:737px;top:693px;width:2px;height:2px;background:#a0a0a0;"></div>
<div class="r" style="left:752px;top:681px;width:272px;height:17px;background:#ffffff;box-sizing:border-box;border:1px solid #c6c6c6;border-right:none"></div>
<div class="r" style="left:768px;top:682px;width:1px;height:15px;background:#c6c6c6;"></div>
<svg class="r" style="left:757px;top:685px;" width="6" height="9" viewBox="0 0 6 9"><path d="M5 0 V8.5 L0.5 4.25 Z" fill="#444"/></svg>
<div class="r" style="left:0px;top:701px;width:1024px;height:1px;background:#cfcfcf;"></div>
<div class="r" style="left:0px;top:702px;width:1024px;height:23px;background:#f3f2f1;"></div>
<div class="r" style="left:965px;top:702px;width:42px;height:23px;background:#c8c6c4;"></div>
<svg class="r" style="left:978px;top:705px;" width="15" height="14" viewBox="0 0 15 14"><rect x="0.8" y="0.8" width="13.4" height="12.6" fill="#fff" stroke="#333" stroke-width="1.6"/><path d="M5.3 0.8 V13.4 M9.8 0.8 V13.4 M0.8 5 H14.2 M0.8 9.2 H14.2" stroke="#333" stroke-width="1.6"/></svg>
<svg class="r" style="left:1019px;top:705px;" width="6" height="14" viewBox="0 0 6 14"><rect x="2.5" y="0.8" width="10" height="12.6" fill="#fff" stroke="#333" stroke-width="1.5"/></svg>
<div class="r" style="left:0px;top:724px;width:1024px;height:1px;background:#d9d9d9;"></div>
<div class="r" style="left:0px;top:725px;width:1024px;height:43px;background:#1c1515;"></div>
<div class="r" style="left:339px;top:725px;width:685px;height:43px;background:linear-gradient(90deg,#1d1516 0%,#221a12 22%,#1a1614 45%,#111518 62%,#141416 80%,#1a1314 100%)"></div>
<div class="r" style="left:0px;top:725px;width:339px;height:43px;background:#f0f0f0;"></div>
<svg class="r" style="left:-6px;top:735px;" width="14" height="23" viewBox="0 0 14 23"><circle cx="2" cy="11" r="8.5" fill="none" stroke="#111" stroke-width="3.2"/></svg>
<div class="t" style="left:15.60px;top:740.67px;font-size:14.95px;line-height:14.95px;color:#333333;font-weight:normal;transform:scaleX(0.9641);">Type here to search</div>
<svg class="r" style="left:310px;top:738px;" width="15" height="17" viewBox="0 0 15 17"><rect x="4" y="0.8" width="7" height="11" rx="2.5" fill="none" stroke="#444" stroke-width="1.4"/><path d="M1.2 8 A6.3 6.3 0 0 0 13.8 8" fill="none" stroke="#444" stroke-width="1.4"/><path d="M7.5 14.3 V16.2 M4.5 16.2 H10.5" stroke="#444" stroke-width="1.4"/></svg>
<div class="r" style="left:716px;top:725px;width:52px;height:43px;background:#3e4144;"></div>
<div class="r" style="left:667px;top:765px;width:43px;height:3px;background:#76b9ed;"></div>
<div class="r" style="left:716px;top:765px;width:52px;height:3px;background:#76b9ed;"></div>
<div class="r" style="left:774px;top:765px;width:43px;height:3px;background:#76b9ed;"></div>
<svg class="r" style="left:352px;top:730px;" width="32" height="32" viewBox="0 0 32 32"><path d="M5.8 14.6 C8 8.5 12 5 17 5 C23 5 26.8 9 26.8 15 V18.75 H13.4 C13.8 21 15.5 22.5 18.5 22.5 C21 22.5 23.5 22 25 21.3 V25.4 C23 26.9 20.5 27.7 17.5 27.7 C11.5 27.7 8.2 23.8 8.2 19 C8.2 15.5 10 12.5 13.3 11.2 C10 11.5 7.5 12.8 5.8 14.6 Z M13.4 13.8 H20 C20 11.5 18.6 10.2 16.8 10.2 C15 10.2 13.7 11.8 13.4 13.8 Z" fill="#1a84e0" fill-rule="evenodd"/></svg>
<svg class="r" style="left:410px;top:736px;" width="24" height="21" viewBox="0 0 24 21"><path d="M0.2 1.5 Q0.2 0.8 1 0.8 H9.8 L11.6 3.2 H0.2 Z" fill="#f3c95a"/><circle cx="2" cy="2.1" r="0.9" fill="#3aa3a8"/><rect x="0.2" y="2.8" width="22.8" height="16" rx="0.8" fill="#fbe29a"/><path d="M4.1 10.5 H19 V19.7 H15 V14 H8 V19.7 H4.1 Z" fill="#3aa0e8"/></svg>
<svg class="r" style="left:462px;top:733px;" width="26" height="25" viewBox="0 0 26 25"><path d="M8.5 8 V5 A4.5 4.5 0 0 1 17.5 5 V8" fill="none" stroke="#e8e8e8" stroke-width="1.6"/><path d="M10.5 8 V5.5 A2.5 2.5 0 0 1 15.5 5.5 V8" fill="none" stroke="#cfcfcf" stroke-width="1"/><rect x="0.5" y="7" width="25" height="18" rx="1" fill="#fafafa"/><rect x="7.5" y="10.5" width="5" height="5" fill="#f25022"/><rect x="13.5" y="10.5" width="5" height="5" fill="#7fba00"/><rect x="7.5" y="16.5" width="5" height="5" fill="#00a4ef"/><rect x="13.5" y="16.5" width="5" height="5" fill="#ffb900"/></svg>
<svg class="r" style="left:515px;top:733px;" width="26" height="26" viewBox="0 0 26 26"><rect width="26" height="26" fill="#29a8dc"/><path d="M10 6 H14 V18.5 H20.5 V21.5 H9 Z" fill="#fff"/><path d="M10 6 L6 21.5 H9 Z" fill="#1b3a8a"/></svg>
<svg class="r" style="left:570px;top:733px;" width="23" height="26" viewBox="0 0 23 26"><path d="M0 3 L11.5 9 L23 3 V20 L11.5 26 L0 20 Z M4.5 10 V17.5 L11.5 21.3 L18.5 17.5 V10 L11.5 14 Z" fill="#c8302e" fill-rule="evenodd"/></svg>
<svg class="r" style="left:621px;top:734px;" width="28" height="23" viewBox="0 0 28 23"><path d="M1 7 L14 0.8 L27 7 V22 H1 Z" fill="#fafafa"/><path d="M2.3 7.4 H25.2 L16 12.5 L21.2 17.7 Z" fill="#141414"/></svg>
<svg class="r" style="left:678px;top:736px;" width="20" height="20" viewBox="0 0 20 20"><rect x="0.4" y="0.3" width="19.6" height="19.7" fill="#fee100"/><path d="M10.8 10.9 H19.2 L10.8 18.8 Z" fill="#141414"/></svg>
<svg class="r" style="left:728px;top:734px;" width="26" height="25" viewBox="0 0 26 25"><rect x="6.3" y="0.6" width="19.3" height="23.4" rx="1" fill="#185c37"/><rect x="6.3" y="0.6" width="9.6" height="5.9" fill="#21a366"/><rect x="15.9" y="0.6" width="9.7" height="5.9" fill="#33c481"/><rect x="6.3" y="6.5" width="19.3" height="5.9" fill="#21a366"/><rect x="6.3" y="12.4" width="19.3" height="5.8" fill="#107c41"/><rect x="0.8" y="6" width="13.2" height="12.9" rx="1" fill="#107c41"/><path d="M4.5 8.8 L10.3 16.2 M10.3 8.8 L4.5 16.2" stroke="#fff" stroke-width="1.8"/></svg>
<svg class="r" style="left:783px;top:734px;" width="24" height="24" viewBox="0 0 24 24"><circle cx="12" cy="12" r="11.8" fill="#db4437"/><path d="M12 12 L1.8 6 A11.8 11.8 0 0 0 12 23.8 Z" fill="#0f9d58"/><path d="M12 12 L22.2 6 A11.8 11.8 0 0 1 12 23.8 Z" fill="#ffcd40"/><path d="M12 6.5 H22.3 A11.8 11.8 0 0 0 1.8 6 L6.8 14.8 A5.5 5.5 0 0 1 12 6.5 Z" fill="#db4437"/><path d="M6.8 14.8 L1.8 6 A11.8 11.8 0 0 0 12 23.8 L17 15 A5.5 5.5 0 0 1 6.8 14.8 Z" fill="#0f9d58"/><path d="M17 15 L12 23.8 A11.8 11.8 0 0 0 22.3 6.5 H12 A5.5 5.5 0 0 1 17 15 Z" fill="#ffcd40"/><circle cx="12" cy="12" r="5.5" fill="#fff"/><circle cx="12" cy="12" r="4.3" fill="#4285f4"/></svg>
<svg class="r" style="left:896px;top:737px;" width="20" height="19" viewBox="0 0 20 19"><circle cx="12.5" cy="3.7" r="2.6" fill="none" stroke="#eee" stroke-width="1.3"/><path d="M9.5 9.6 A4.2 4.2 0 0 1 16 8.6 L17.6 11" fill="none" stroke="#eee" stroke-width="1.3"/><circle cx="5.8" cy="9.3" r="2.6" fill="none" stroke="#eee" stroke-width="1.3"/><path d="M1.2 17.8 L2.6 15.2 A3.9 3.9 0 0 1 9 15.2 L10.4 17.8" fill="none" stroke="#eee" stroke-width="1.3"/></svg>
<svg class="r" style="left:940px;top:741px;" width="15" height="9" viewBox="0 0 15 9"><path d="M1.2 8.2 L7.7 1.2 L14.2 8.2" fill="none" stroke="#d8d8d8" stroke-width="1.2"/></svg>
<svg class="r" style="left:972px;top:740px;" width="20" height="17" viewBox="0 0 20 17"><path d="M2.5 11.8 A3.3 3.3 0 0 1 3.5 5.5 A5.2 5.2 0 0 1 13 3.8 A3.8 3.8 0 0 1 15.5 11.8 Z" fill="#d4d4d4"/><path d="M2.5 11.8 A3.3 3.3 0 0 1 3.5 5.5 A5.2 5.2 0 0 1 8 2.2 C6.5 4.5 7 8.5 9.5 11.8 Z" fill="#a8a8a8"/><circle cx="13.8" cy="9.8" r="5.2" fill="#fff"/><path d="M10.9 10 A2.9 2.9 0 0 1 16.3 8.5 M16.7 9.8 A2.9 2.9 0 0 1 11.3 11.3" fill="none" stroke="#1e88e5" stroke-width="1.5"/><path d="M16.8 6.5 V9 H14.5 M10.8 13 V10.7 H13" fill="none" stroke="#1e88e5" stroke-width="1.1"/></svg>
<svg class="r" style="left:1008px;top:742px;" width="20" height="10" viewBox="0 0 20 10"><rect x="1" y="1" width="17" height="8" fill="#fff" stroke="#808080" stroke-width="2"/></svg>
</body></html>
